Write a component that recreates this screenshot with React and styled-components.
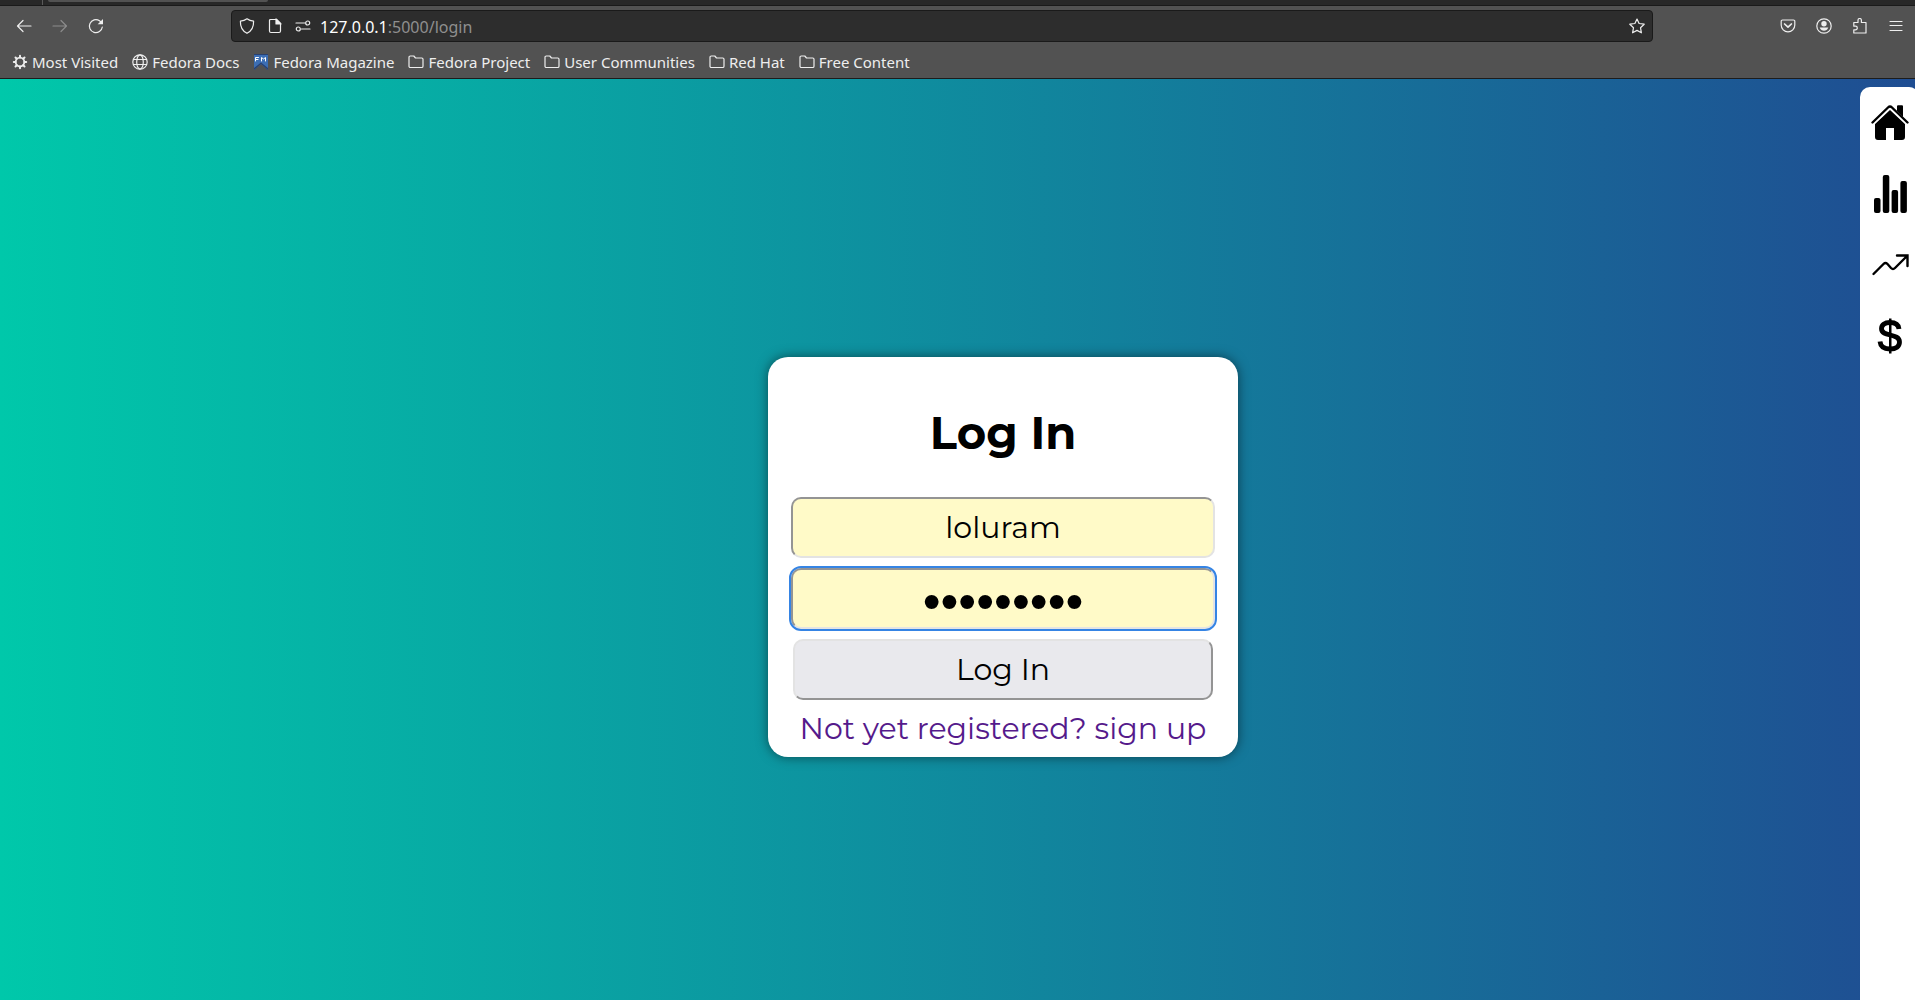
import styled, { createGlobalStyle } from "styled-components";

const GlobalStyle = createGlobalStyle`
  * {
    box-sizing: border-box;
  }

  body {
    margin: 0;
    overflow: hidden;
  }
`;

const bookmarks = [
  { name: "Most Visited", icon: "gear" },
  { name: "Fedora Docs", icon: "globe" },
  { name: "Fedora Magazine", icon: "magazine" },
  { name: "Fedora Project", icon: "folder" },
  { name: "User Communities", icon: "folder" },
  { name: "Red Hat", icon: "folder" },
  { name: "Free Content", icon: "folder" },
];

function Icon({ name }) {
  switch (name) {
    case "back":
      return (
        <ChromeSvg viewBox="0 0 16 16">
          <path d="M15 8H1.500M7 2.500L1.500 8L7 13.500" />
        </ChromeSvg>
      );
    case "forward":
      return (
        <ChromeSvg viewBox="0 0 16 16">
          <path d="M1 8H14.500M9 2.500L14.500 8L9 13.500" />
        </ChromeSvg>
      );
    case "reload":
      return (
        <ChromeSvg viewBox="0 0 16 16">
          <path d="M14.300 9A6.500 6.500 0 1 1 11.500 2.800L13 4" />
          <path d="M15 1V6.300H9.700Z" fill="currentColor" stroke="none" />
        </ChromeSvg>
      );
    case "shield":
      return (
        <ChromeSvg viewBox="0 0 16 16">
          <path d="M8 .8C9.800 2.200 12 3 14.600 3.200C14.800 9 12.500 13 8 15.300C3.500 13 1.200 9 1.400 3.200C4 3 6.200 2.200 8 .8Z" />
        </ChromeSvg>
      );
    case "page":
      return (
        <ChromeSvg viewBox="0 0 16 16">
          <path d="M3.500 1.500H9.500L13.500 5.500V13A1.500 1.500 0 0 1 12 14.500H4A1.500 1.500 0 0 1 2.500 13V2.500A1 1 0 0 1 3.500 1.500Z" />
          <path d="M9 1V6H14Z" fill="currentColor" />
        </ChromeSvg>
      );
    case "permissions":
      return (
        <ChromeSvg viewBox="0 0 16 16">
          <path d="M1 5H10M6.500 11H15" />
          <circle cx="12.700" cy="5" r="2" />
          <circle cx="3.300" cy="11" r="2" />
        </ChromeSvg>
      );
    case "star":
      return (
        <ChromeSvg viewBox="0 0 16 16">
          <path d="M8 1L10.100 5.500L15.200 6.200L11.500 9.700L12.400 14.800L8 12.400L3.600 14.800L4.500 9.700L.8 6.200L5.900 5.500Z" />
        </ChromeSvg>
      );
    case "pocket":
      return (
        <ChromeSvg viewBox="0 0 16 16">
          <path d="M2.500 2H13.500A1.300 1.300 0 0 1 14.800 3.300V7A6.800 6.800 0 0 1 1.200 7V3.300A1.300 1.300 0 0 1 2.500 2Z" />
          <path d="M4.600 6L8 9.200L11.400 6" strokeWidth="1.700" />
        </ChromeSvg>
      );
    case "account":
      return (
        <ChromeSvg viewBox="0 0 16 16">
          <circle cx="8" cy="8" r="7.200" />
          <circle cx="8" cy="5.800" r="2.700" fill="currentColor" stroke="none" />
          <path d="M3.700 9.500H12.300Q11 12.800 8 12.800Q5 12.800 3.700 9.500Z" fill="currentColor" stroke="none" />
        </ChromeSvg>
      );
    case "extensions":
      return (
        <ChromeSvg viewBox="0 0 16 16">
          <path d="M1.800 6.500V4.500H6V2.200A1.700 1.700 0 0 1 9.400 2.200V4.500H14V15H1.800V11.800H3.500A1.800 1.800 0 0 0 3.500 8.200H1.800Z" />
        </ChromeSvg>
      );
    case "menu":
      return (
        <ChromeSvg viewBox="0 0 16 16">
          <path d="M2 3.500H14M2 7.500H14M2 12.500H14" />
        </ChromeSvg>
      );
    case "gear":
      return (
        <ChromeSvg viewBox="0 0 16 16">
          <circle cx="8" cy="8" r="4.300" strokeWidth="1.800" />
          <path
            d="M8 1.800V3.500M8 12.500V14.200M1.800 8H3.500M12.500 8H14.200M3.500 3.500L4.800 4.800M11.200 11.200L12.500 12.500M3.500 12.500L4.800 11.200M11.200 4.800L12.500 3.500"
            strokeWidth="2"
          />
        </ChromeSvg>
      );
    case "globe":
      return (
        <ChromeSvg viewBox="0 0 16 16">
          <circle cx="8" cy="8" r="7.200" />
          <ellipse cx="8" cy="8" rx="3.300" ry="7.200" />
          <path d="M1.500 5.500H14.500M1.500 10.500H14.500" />
        </ChromeSvg>
      );
    case "magazine":
      return (
        <ChromeSvg viewBox="0 0 16 16">
          <path d="M1 0H15V16L8 10L1 16Z" fill="#3c6eb4" stroke="none" />
          <path d="M1 0H15V1H1ZM1 16V14L8 8.500L15 14V16L8 10Z" fill="#294172" stroke="none" />
          <path
            d="M2.500 7V3.500H5.500M2.500 5.500H5M8.500 7V3.500L10.500 5L12.500 3.500V7"
            stroke="#fff"
            strokeWidth="1"
          />
        </ChromeSvg>
      );
    default:
      return (
        <ChromeSvg viewBox="0 0 16 16">
          <path d="M1 3.300A1.300 1.300 0 0 1 2.300 2H5.800L7.500 4H13.700A1.300 1.300 0 0 1 15 5.300V12.200A1.300 1.300 0 0 1 13.700 13.500H2.300A1.300 1.300 0 0 1 1 12.200Z" />
        </ChromeSvg>
      );
  }
}

function BrowserBar() {
  return (
    <StyledBrowser>
      <TabStrip>
        <ActiveTab />
      </TabStrip>
      <Toolbar>
        <NavButtons>
          <ToolButton aria-label="Back">
            <Icon name="back" />
          </ToolButton>
          <ToolButton aria-label="Forward" disabled>
            <Icon name="forward" />
          </ToolButton>
          <ToolButton aria-label="Reload">
            <Icon name="reload" />
          </ToolButton>
        </NavButtons>
        <AddressBar>
          <AddressIcons>
            <Icon name="shield" />
            <Icon name="page" />
            <Icon name="permissions" />
          </AddressIcons>
          <Address>
            <b>127.0.0.1</b>:5000/login
          </Address>
          <Icon name="star" />
        </AddressBar>
        <Actions>
          <ToolButton aria-label="Save to Pocket">
            <Icon name="pocket" />
          </ToolButton>
          <ToolButton aria-label="Account">
            <Icon name="account" />
          </ToolButton>
          <ToolButton aria-label="Extensions">
            <Icon name="extensions" />
          </ToolButton>
          <ToolButton aria-label="Menu">
            <Icon name="menu" />
          </ToolButton>
        </Actions>
      </Toolbar>
      <Bookmarks>
        {bookmarks.map((bookmark) => (
          <Bookmark key={bookmark.name} href="#">
            <Icon name={bookmark.icon} />
            <span>{bookmark.name}</span>
          </Bookmark>
        ))}
      </Bookmarks>
    </StyledBrowser>
  );
}

function SideMenu() {
  return (
    <StyledSideMenu>
      <a href="#home" aria-label="Home">
        <svg viewBox="0 0 38 38">
          <path d="M26 2.500Q26 1.500 27 1.500H31Q32 1.500 32 2.500V14L26 8Z" />
          <path d="M19 6L34 20V33Q34 36 31 36H23V24H15V36H7Q4 36 4 33V20Z" />
          <path d="M1.500 18.500L17 3.500Q19 1.500 21 3.500L36.500 18.500" fill="none" stroke="#fff" strokeWidth="5" />
          <path d="M26 2.500Q26 1.500 27 1.500H31Q32 1.500 32 2.500V13L26 7Z" />
          <path
            d="M1.500 18.500L17 3.500Q19 1.500 21 3.500L36.500 18.500"
            fill="none"
            stroke="#000"
            strokeWidth="2.400"
            strokeLinecap="round"
          />
        </svg>
      </a>
      <a href="#stats" aria-label="Statistics">
        <svg viewBox="0 0 38 38">
          <rect x="3" y="23" width="6.500" height="15" rx="2" />
          <rect x="11.800" y="0" width="6.500" height="38" rx="2" />
          <rect x="20.600" y="15" width="6.500" height="23" rx="2" />
          <rect x="29.400" y="6" width="6.500" height="32" rx="2" />
        </svg>
      </a>
      <a href="#trends" aria-label="Trends">
        <svg viewBox="0 0 38 38">
          <path
            d="M2.500 28L12.500 18Q14.500 16 16.500 18L20 22Q22 24 24 22L36 10M26 9.500H36.500V20"
            fill="none"
            stroke="#000"
            strokeWidth="2.400"
            strokeLinecap="round"
          />
        </svg>
      </a>
      <a href="#money" aria-label="Money">
        <svg viewBox="0 0 38 38">
          <path
            d="M28 12C27.500 7.500 24 5.500 19 5.500C13.500 5.500 10.500 8 10.500 11.800C10.500 20.500 28.500 15.500 28.500 25C28.500 29.500 25 32 19 32C13 32 9.500 29.500 9 24.500"
            fill="none"
            stroke="#000"
            strokeWidth="4.800"
          />
          <path d="M18 1.500H20.500V36.500H18Z" />
        </svg>
      </a>
    </StyledSideMenu>
  );
}

export default function App() {
  return (
    <Page>
      <GlobalStyle />
      <BrowserBar />
      <Content>
        <LoginArea>
          <LoginCard onSubmit={(e) => e.preventDefault()}>
            <h1>Log In</h1>
            <Field type="text" aria-label="Username" defaultValue="loluram" />
            <PasswordField type="password" aria-label="Password" defaultValue="password1" />
            <SubmitButton type="submit">Log In</SubmitButton>
            <SignUpLink href="#signup">Not yet registered? sign up</SignUpLink>
          </LoginCard>
        </LoginArea>
        <SideMenu />
      </Content>
    </Page>
  );
}

const Page = styled.div`
  display: flex;
  flex-direction: column;
  font-family: "Montserrat", "Inter", sans-serif;
  min-height: 100vh;
`;

const ChromeSvg = styled.svg`
  fill: none;
  flex: none;
  height: 16px;
  stroke: currentColor;
  stroke-linecap: round;
  stroke-linejoin: round;
  stroke-width: 1.2;
  width: 16px;
`;

const StyledBrowser = styled.header`
  background-color: #525252;
  border-bottom: 1px solid #1c1c1c;
  color: #eeeeee;
  font-family: "Noto Sans", sans-serif;
  font-size: 16px;
`;

const TabStrip = styled.div`
  background-color: #282828;
  border-bottom: 1px solid #1a1a1a;
  height: 6px;
  padding-left: 42px;
`;

const ActiveTab = styled.div`
  border-left: 1px solid #5a5a5a;
  height: 5px;
  padding-left: 5px;

  &::before {
    background-color: #525252;
    border-radius: 0 0 4px 4px;
    content: "";
    display: block;
    height: 2px;
    width: 220px;
  }
`;

const Toolbar = styled.div`
  align-items: center;
  display: flex;
  height: 40px;
  padding: 0 5px 0 10px;
`;

const NavButtons = styled.div`
  display: flex;
  gap: 8px;
  width: 221px;
`;

const Actions = styled.div`
  display: flex;
  gap: 8px;
  justify-content: flex-end;
  width: 257px;
`;

const ToolButton = styled.button`
  align-items: center;
  background: none;
  border: none;
  color: #eeeeee;
  display: flex;
  height: 28px;
  justify-content: center;
  padding: 0;
  width: 28px;

  &:disabled {
    color: #8c8c8c;
  }
`;

const AddressBar = styled.div`
  align-items: center;
  background-color: #2d2d2d;
  border: 1px solid #1a1a1a;
  border-radius: 4px;
  display: flex;
  flex: 1;
  height: 32px;
  padding: 0 7px;
`;

const AddressIcons = styled.div`
  display: flex;
  gap: 12px;
  width: 81px;
`;

const Address = styled.span`
  color: #8f8f8f;
  flex: 1;
  padding-top: 2px;

  b {
    color: #ffffff;
    font-weight: 400;
  }
`;

const Bookmarks = styled.nav`
  display: flex;
  font-size: 15px;
  gap: 14px;
  height: 32px;
  padding: 0 12px;
`;

const Bookmark = styled.a`
  align-items: center;
  color: #eeeeee;
  display: flex;
  gap: 4px;
  text-decoration: none;
`;

const Content = styled.div`
  background: linear-gradient(to right, #00c8aa, #1f4d92);
  display: flex;
  flex: 1;
  overflow: hidden;
  padding-top: 8px;
`;

const LoginArea = styled.main`
  align-items: center;
  display: flex;
  flex: 1;
  justify-content: center;
  padding: 26px 0 0 146px;
`;

const LoginCard = styled.form`
  align-items: center;
  background-color: #ffffff;
  border-radius: 20px;
  box-shadow: 0 0 12px rgba(0, 0, 0, 0.5);
  display: flex;
  flex-direction: column;
  padding: 46px 23px 8px;
  width: 470px;

  h1 {
    font-size: 45px;
    font-weight: 700;
    line-height: 60px;
    margin: 0 0 34px;
  }
`;

const Field = styled.input`
  background-color: #fffac8;
  border: 2px solid #e3e3e3;
  border-color: #949494 #e3e3e3 #e3e3e3 #949494;
  border-radius: 10px;
  color: #000000;
  font-family: inherit;
  font-size: 30px;
  font-weight: 400;
  height: 61px;
  margin-bottom: 10px;
  outline: none;
  text-align: center;
  width: 100%;
`;

const PasswordField = styled(Field)`
  font-family: "Liberation Sans", sans-serif;
  font-size: 51px;
  outline: 2px solid #3584e4;
  padding: 6px 2px 0;
`;

const SubmitButton = styled.button`
  background-color: #e9e9ed;
  border: 2px solid #949494;
  border-color: #e3e3e3 #949494 #949494 #e3e3e3;
  border-radius: 10px;
  color: #000000;
  font-family: inherit;
  font-size: 30px;
  font-weight: 400;
  height: 61px;
  width: 420px;
`;

const SignUpLink = styled.a`
  color: #551a8b;
  font-size: 30px;
  font-weight: 400;
  line-height: 40px;
  margin-top: 9px;
  text-decoration: none;
  white-space: nowrap;
`;

const StyledSideMenu = styled.nav`
  align-items: center;
  background-color: #ffffff;
  border-radius: 10px 10px 0 0;
  display: flex;
  flex-direction: column;
  gap: 33px;
  margin-right: -4px;
  padding-top: 17px;
  width: 59px;

  a,
  svg {
    display: block;
    height: 38px;
    width: 38px;
  }
`;
